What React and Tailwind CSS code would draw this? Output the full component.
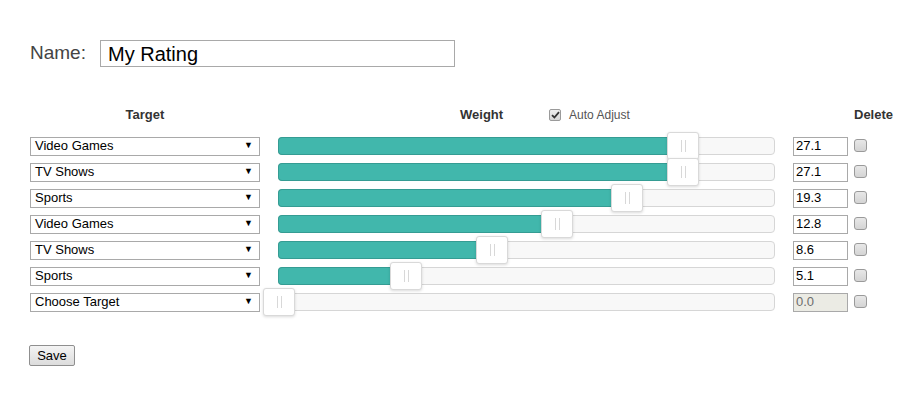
import React from "react";

const rows = [
  { target: "Video Games", pos: 404, value: "27.1" },
  { target: "TV Shows", pos: 404, value: "27.1" },
  { target: "Sports", pos: 348, value: "19.3" },
  { target: "Video Games", pos: 278, value: "12.8" },
  { target: "TV Shows", pos: 213, value: "8.6" },
  { target: "Sports", pos: 127, value: "5.1" },
  { target: "Choose Target", pos: 0, value: "0.0", disabled: true },
];

const Box = () => (
  <div className="w-[13px] h-[13px] rounded-[3px] border border-[#9a9a9a] bg-gradient-to-b from-[#e8e8e8] to-[#d4d4d4]" />
);

const Slider = ({ pos }) => (
  <div className="relative w-[497px] h-[18px] rounded-[4px] border border-[#d6d6d6] bg-[#f8f8f8]">
    {pos > 0 && (
      <div
        className="absolute -left-px -top-px h-[18px] rounded-l-[4px] bg-[#41b7ac] border border-[#359c93] border-r-0"
        style={{ width: pos + 1 }}
      />
    )}
    <div
      className="absolute top-[-6px] w-[32px] h-[28px] -ml-[16px] rounded-[3px] border border-[#d9d9d9] bg-white shadow-[0_1px_3px_rgba(0,0,0,0.15)] flex items-center justify-center gap-[3px]"
      style={{ left: pos }}
    >
      <span className="w-px h-[12px] bg-[#d8d8d8]" />
      <span className="w-px h-[12px] bg-[#d8d8d8]" />
    </div>
  </div>
);

export default function App() {
  return (
    <div className="bg-white w-[923px] h-[398px] pl-[30px] pt-[40px] font-['Liberation_Sans',Arial,sans-serif] text-[#222]">
      <div className="flex items-center h-[27px]">
        <span className="w-[70px] text-[19px] text-[#444]">Name:</span>
        <input
          defaultValue="My Rating"
          className="w-[355px] h-[27px] border border-[#a9a9a9] px-[7px] text-[20px] text-black outline-none"
        />
      </div>

      <div className="flex items-center mt-[39px] h-[18px] text-[13px] font-bold text-[#333]">
        <div className="w-[230px] text-center">Target</div>
        <div className="w-[497px] ml-[18px] flex items-center pl-[182px]">
          <span>Weight</span>
          <div className="ml-[46px] w-[12px] h-[12px] rounded-[2px] border border-[#9a9a9a] bg-gradient-to-b from-[#eeeeee] to-[#d6d6d6] flex items-center justify-center">
            <svg width="9" height="8" viewBox="0 0 9 8">
              <path d="M1 4.2 L3.4 6.5 L8 1.2" fill="none" stroke="#333" strokeWidth="1.8" />
            </svg>
          </div>
          <span className="ml-[8px] text-[12px] font-normal text-[#555]">Auto Adjust</span>
        </div>
        <div className="ml-[79px]">Delete</div>
      </div>

      <div className="mt-[9px] flex flex-col">
        {rows.map((r, i) => (
          <div key={i} className="flex items-center h-[26px]">
            <div className="w-[230px] h-[19px] border border-[#a9a9a9] bg-white flex items-center justify-between pl-[4px] pr-[6px] text-[13px] text-black">
              <span>{r.target}</span>
              <span className="text-[9px]">▼</span>
            </div>
            <div className="ml-[18px]">
              <Slider pos={r.pos} />
            </div>
            <input
              defaultValue={r.value}
              readOnly
              className={
                "ml-[18px] w-[55px] h-[19px] border border-[#a9a9a9] px-[2px] text-[13px] outline-none " +
                (r.disabled ? "bg-[#ebebe4] text-[#6d6d6d]" : "bg-white text-black")
              }
            />
            <div className="ml-[6px] -mt-[2px]">
              <Box />
            </div>
          </div>
        ))}
      </div>

      <button className="mt-[30px] -ml-px w-[46px] h-[21px] rounded-[2px] border border-[#8f8f8f] bg-gradient-to-b from-[#f4f4f4] to-[#dcdcdc] text-[13px] text-black">
        Save
      </button>
    </div>
  );
}
